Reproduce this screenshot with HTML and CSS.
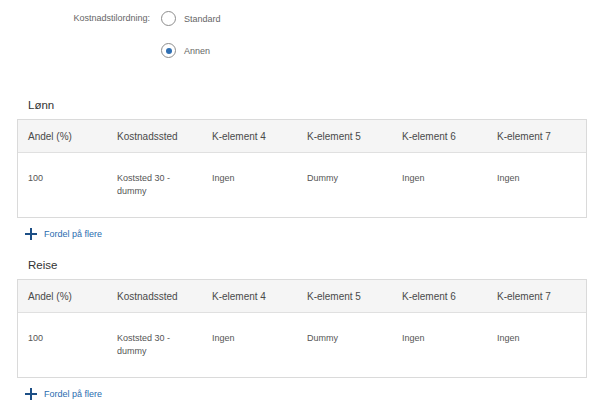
FILE: index.html
```html
<!DOCTYPE html>
<html lang="no">
<head>
<meta charset="utf-8">
<link rel="stylesheet" href="styles.css">
</head>
<body>
<div class="page">
  <div class="assign">
    <div class="assign-label">Kostnadstilordning:</div>
    <div class="radios">
      <label class="radio"><span class="circle"></span><span class="radio-text">Standard</span></label>
      <label class="radio"><span class="circle checked"></span><span class="radio-text">Annen</span></label>
    </div>
  </div>

  <section class="section first">
    <h2 class="title">Lønn</h2>
    <div class="table">
      <div class="row head">
        <div class="cell">Andel (%)</div>
        <div class="cell">Kostnadssted</div>
        <div class="cell">K-element 4</div>
        <div class="cell">K-element 5</div>
        <div class="cell">K-element 6</div>
        <div class="cell">K-element 7</div>
      </div>
      <div class="row body">
        <div class="cell">100</div>
        <div class="cell">Koststed 30 -<br>dummy</div>
        <div class="cell">Ingen</div>
        <div class="cell">Dummy</div>
        <div class="cell">Ingen</div>
        <div class="cell">Ingen</div>
      </div>
    </div>
    <a class="add" href="#"><svg class="plus" width="12" height="12" viewBox="0 0 12 12"><path d="M6 0V12M0 6H12" stroke="#1d4f86" stroke-width="2"/></svg><span>Fordel på flere</span></a>
  </section>

  <section class="section">
    <h2 class="title">Reise</h2>
    <div class="table">
      <div class="row head">
        <div class="cell">Andel (%)</div>
        <div class="cell">Kostnadssted</div>
        <div class="cell">K-element 4</div>
        <div class="cell">K-element 5</div>
        <div class="cell">K-element 6</div>
        <div class="cell">K-element 7</div>
      </div>
      <div class="row body">
        <div class="cell">100</div>
        <div class="cell">Koststed 30 -<br>dummy</div>
        <div class="cell">Ingen</div>
        <div class="cell">Dummy</div>
        <div class="cell">Ingen</div>
        <div class="cell">Ingen</div>
      </div>
    </div>
    <a class="add" href="#"><svg class="plus" width="12" height="12" viewBox="0 0 12 12"><path d="M6 0V12M0 6H12" stroke="#1d4f86" stroke-width="2"/></svg><span>Fordel på flere</span></a>
  </section>
</div>
</body>
</html>
```

FILE: styles.css
```css
* { box-sizing: border-box; }
html, body { margin: 0; padding: 0; background: #fff; }
body {
  font-family: "Liberation Sans", Arial, sans-serif;
  color: #333;
  font-size: 9px;
}
.page {
  padding: 0 18px 0 17px;
}
.assign {
  display: grid;
  grid-template-columns: 133px auto;
  column-gap: 11px;
  padding-top: 11px;
}
.assign-label {
  text-align: right;
  color: #666;
  line-height: 15px;
}
.radios {
  display: flex;
  flex-direction: column;
  gap: 17px;
}
.radio {
  display: flex;
  align-items: center;
  gap: 8px;
  height: 15px;
}
.circle {
  width: 15px;
  height: 15px;
  border: 1px solid #8d8d8d;
  border-radius: 50%;
  display: flex;
  align-items: center;
  justify-content: center;
}
.circle.checked::after {
  content: "";
  width: 6px;
  height: 6px;
  border-radius: 50%;
  background: #2f6fb3;
}
.radio-text {
  color: #666;
}
.section.first {
  margin-top: 40px;
}
.title {
  margin: 0;
  padding-left: 11px;
  font-size: 11.5px;
  font-weight: normal;
  color: #333;
  line-height: 14px;
  height: 21px;
}
.table {
  border: 1px solid #dadada;
}
.row {
  display: grid;
  grid-template-columns: 89px 95px 95px 95px 95px 1fr;
}
.row.head {
  background: #f5f5f5;
  border-bottom: 1px solid #e0e0e0;
  height: 33px;
  align-items: center;
  font-size: 10px;
  color: #4a4a4a;
}
.row.body {
  height: 64px;
  padding-top: 19px;
  line-height: 13px;
  color: #555;
}
.cell {
  padding-left: 10px;
}
.add {
  display: flex;
  align-items: center;
  gap: 7px;
  padding-left: 8px;
  height: 32px;
  margin-bottom: 8px;
  text-decoration: none;
  color: #2a6cb0;
}
.plus { display: block; }
```
